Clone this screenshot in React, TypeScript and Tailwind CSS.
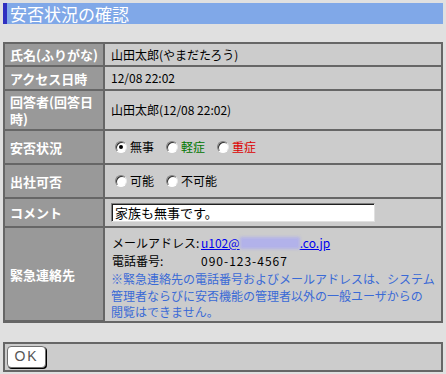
import React from 'react';

const Radio = ({ checked }: { checked?: boolean }) => (
  <span className="inline-flex h-[12px] w-[12px] shrink-0 items-center justify-center rounded-full border border-t-[#808080] border-l-[#808080] border-b-white border-r-[#e8e8e8] bg-white shadow-[inset_1px_1px_0_#303030]">
    {checked && <span className="h-[4px] w-[4px] rounded-full bg-black" />}
  </span>
);

const Option = ({ label, color, checked }: { label: string; color: string; checked?: boolean }) => (
  <label className="flex items-center gap-[3px]">
    <Radio checked={checked} />
    <span className={color}>{label}</span>
  </label>
);

const rows = [
  { label: '氏名(ふりがな)', h: 'h-[21px]', value: <span>山田太郎(やまだたろう)</span> },
  { label: 'アクセス日時', h: 'h-[22px]', value: <span>12/08 22:02</span> },
  { label: '回答者(回答日時)', h: 'h-[38px]', value: <span>山田太郎(12/08 22:02)</span> },
  {
    label: '安否状況',
    h: 'h-[32px]',
    value: (
      <div className="flex items-center gap-[12px] pl-[4px]">
        <Option label="無事" color="text-black" checked />
        <Option label="軽症" color="text-[#007700]" />
        <Option label="重症" color="text-[#dd0000]" />
      </div>
    ),
  },
  {
    label: '出社可否',
    h: 'h-[32px]',
    value: (
      <div className="flex items-center gap-[12px] pl-[4px]">
        <Option label="可能" color="text-black" />
        <Option label="不可能" color="text-black" />
      </div>
    ),
  },
  {
    label: 'コメント',
    h: 'h-[27px]',
    value: (
      <div className="flex h-[19px] w-[264px] items-center border border-t-[#808080] border-l-[#808080] border-b-[#e0e0e0] border-r-[#e0e0e0] bg-white pl-[3px] text-[13px] shadow-[inset_1px_1px_0_#202020]">
        家族も無事です。
      </div>
    ),
  },
  {
    label: '緊急連絡先',
    h: 'h-[92px]',
    value: (
      <div className="flex h-full flex-col pt-[6px]">
        <div className="flex leading-[18px]">
          <span className="w-[90px] shrink-0 pl-[1px]">メールアドレス:</span>
          <a className="text-[#0000ee] underline">
            u102@<span className="inline-block h-[12px] w-[60px] translate-y-[1px] bg-[#b2b2ea] blur-[1.5px]" />.co.jp
          </a>
        </div>
        <div className="flex leading-[18px]">
          <span className="w-[90px] shrink-0 pl-[1px]">電話番号:</span>
          <span className="tracking-[1px]">090-123-4567</span>
        </div>
        <p className="mt-[1px] leading-[16.5px] text-[#3a6ad6]">
          ※緊急連絡先の電話番号およびメールアドレスは、システム
          <br />
          管理者ならびに安否機能の管理者以外の一般ユーザからの
          <br />
          閲覧はできません。
        </p>
      </div>
    ),
  },
];

export default function App() {
  return (
    <div className="min-h-[374px] bg-[#e0e0e0] px-[3px] pt-[3px] font-['Noto_Sans_CJK_JP',sans-serif] text-[12px] text-black">
      <div className="flex h-[21px] w-[440px] items-center border-l-[4px] border-[#3030c0] bg-[#80a8e8] pl-[3px] text-[17px] leading-none text-white">
        安否状況の確認
      </div>

      <div className="mt-[18px] grid w-[440px] grid-cols-[98px_1fr] gap-[2px] bg-[#666666] p-[2px]">
        {rows.map((row) => (
          <React.Fragment key={row.label}>
            <div className={`flex items-center bg-[#999999] pl-[5px] pr-[4px] text-[13px] font-bold leading-[17px] text-white ${row.h}`}>
              {row.label}
            </div>
            <div className="flex items-center bg-[#cccccc] pl-[6px]">{row.value}</div>
          </React.Fragment>
        ))}
      </div>

      <div className="mt-[19px] flex h-[30px] w-[440px] items-start border-2 border-[#666666] bg-[#cccccc] pl-[2px] pt-[2px]">
        <button className="flex h-[22px] w-[39px] items-center justify-center rounded-[4px] border border-[#707070] bg-white font-['Liberation_Sans',sans-serif] text-[14px] tracking-[2px] text-[#555555] shadow-[1px_1px_0_#000]">
          OK
        </button>
      </div>
    </div>
  );
}
